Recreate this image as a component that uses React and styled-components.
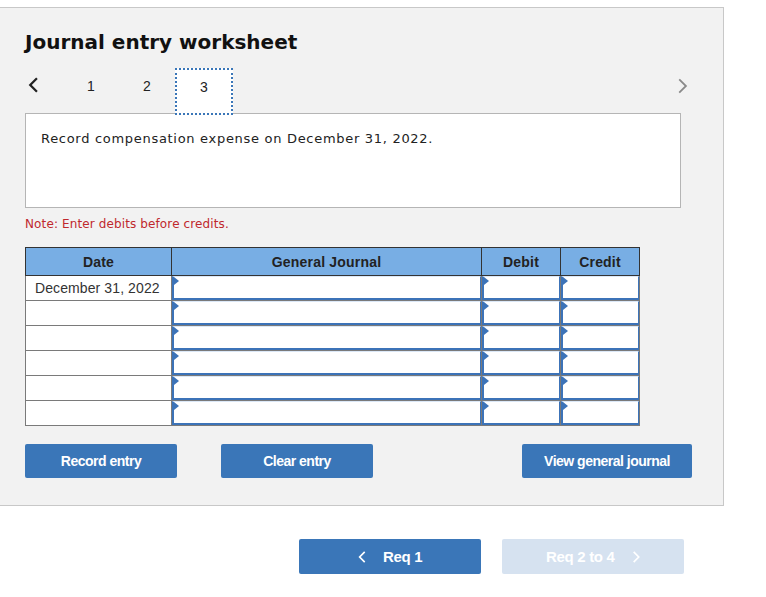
import React from "react";
import styled, { createGlobalStyle } from "styled-components";

const GlobalStyle = createGlobalStyle`
  body {
    margin: 0;
    background: #ffffff;
    font-family: "Liberation Sans", Arial, sans-serif;
  }
`;

const Page = styled.div`
  padding-top: 7px;
  width: 766px;
`;

const Panel = styled.div`
  width: 724px;
  height: 499px;
  box-sizing: border-box;
  background: #f2f2f2;
  border: 1px solid #c8c8c8;
  border-left: none;
  padding: 21px 0 0 25px;
`;

const Title = styled.h1`
  margin: 0;
  font-family: "DejaVu Sans", Verdana, sans-serif;
  font-size: 20px;
  font-weight: bold;
  line-height: 26px;
  color: #111;
`;

const TabRow = styled.div`
  display: flex;
  align-items: stretch;
  height: 47px;
  margin-top: 13px;
  width: 663px;
  position: relative;
  z-index: 2;
`;

const Arrow = styled.div`
  width: ${(p) => p.$w}px;
  display: flex;
  align-items: center;
  justify-content: ${(p) => (p.$right ? "flex-end" : "flex-start")};
  padding-left: ${(p) => (p.$right ? 0 : 3)}px;
  padding-bottom: ${(p) => (p.$right ? 12 : 14)}px;
  margin-left: ${(p) => (p.$right ? "auto" : 0)};
`;

const Tab = styled.div`
  width: 56px;
  box-sizing: border-box;
  display: flex;
  align-items: center;
  justify-content: center;
  font-size: 14px;
  color: #222;
  padding-bottom: 12px;
`;

const ActiveTab = styled(Tab)`
  width: 58px;
  background: #fff;
  border: 2px dotted #3a76b8;
  padding-bottom: 10px;
`;

const Prompt = styled.div`
  width: 656px;
  height: 95px;
  box-sizing: border-box;
  margin-top: -2px;
  background: #fff;
  border: 1px solid #b5b5b5;
  padding: 17px 0 0 15px;
  font-family: "DejaVu Sans", Verdana, sans-serif;
  font-size: 13px;
  letter-spacing: 0.7px;
  color: #222;
  position: relative;
  z-index: 1;
`;

const Note = styled.div`
  margin-top: 8px;
  font-family: "DejaVu Sans", Verdana, sans-serif;
  font-size: 12px;
  letter-spacing: 0.12px;
  color: #c0282d;
  line-height: 16px;
`;

const Table = styled.table`
  margin-top: 15px;
  border-collapse: collapse;
  table-layout: fixed;
  width: 614px;
`;

const Th = styled.th`
  width: ${(p) => p.$w}px;
  height: 27px;
  padding: 0;
  background: #78aee4;
  border: 1px solid #333;
  font-size: 14px;
  font-weight: bold;
  letter-spacing: 0.2px;
  color: #222;
  text-align: center;
`;

const DateCell = styled.td`
  height: 24px;
  padding: 0 0 0 9px;
  background: #fff;
  border: 1px solid #7a7a7a;
  font-size: 14px;
  letter-spacing: 0.1px;
  color: #333;
  white-space: nowrap;
`;

const InputCell = styled.td`
  height: 24px;
  padding: 0;
  border: 1px solid #7a7a7a;
  background: #fff;
`;

const Field = styled.div`
  height: 24px;
  box-sizing: border-box;
  border: 1px solid #3c73b8;
  border-left-width: 2px;
  border-bottom-width: 2px;
  border-top-color: #dbe8f7;
  background: #fff;
  position: relative;

  &::before {
    content: "";
    position: absolute;
    left: 0;
    top: 0;
    border-left: 5px solid #3c73b8;
    border-top: 4px solid transparent;
    border-bottom: 4px solid transparent;
  }
`;

const ButtonRow = styled.div`
  display: flex;
  margin-top: 18px;
  width: 667px;
`;

const Button = styled.button`
  height: 34px;
  width: ${(p) => p.$w}px;
  margin-left: ${(p) => p.$ml || 0}px;
  border: none;
  border-radius: 2px;
  background: #3a76b8;
  color: #fff;
  font-family: "Liberation Sans", Arial, sans-serif;
  font-size: 14px;
  font-weight: bold;
  letter-spacing: -0.5px;
  cursor: pointer;
`;

const Footer = styled.div`
  display: flex;
  gap: 21px;
  padding: 33px 0 0 299px;
`;

const NavButton = styled.button`
  width: 182px;
  height: 35px;
  border: none;
  border-radius: 2px;
  background: ${(p) => (p.$disabled ? "#d6e2f0" : "#3a76b8")};
  color: #fff;
  font-family: "Liberation Sans", Arial, sans-serif;
  font-size: 15px;
  font-weight: bold;
  letter-spacing: -0.3px;
  display: flex;
  align-items: center;
  justify-content: center;
  gap: 17px;
`;

const Chevron = ({ dir = "left", color = "#222", size = 14, stroke = 2.2 }) => (
  <svg width={size * 0.7} height={size} viewBox="0 0 10 14">
    <path
      d={dir === "left" ? "M8 1 L2 7 L8 13" : "M2 1 L8 7 L2 13"}
      fill="none"
      stroke={color}
      strokeWidth={stroke}
    />
  </svg>
);

const columns = [
  { label: "Date", w: 145 },
  { label: "General Journal", w: 309 },
  { label: "Debit", w: 78 },
  { label: "Credit", w: 78 },
];

const rows = ["December 31, 2022", "", "", "", "", ""];

export default function App() {
  return (
    <Page>
      <GlobalStyle />
      <Panel>
        <Title>Journal entry worksheet</Title>
        <TabRow>
          <Arrow $w={35}>
            <Chevron dir="left" color="#222" size={16} stroke={2} />
          </Arrow>
          <Tab>1</Tab>
          <Tab>2</Tab>
          <ActiveTab>3</ActiveTab>
          <Arrow $w={20} $right>
            <Chevron dir="right" color="#8a8a8a" size={16} stroke={1.6} />
          </Arrow>
        </TabRow>
        <Prompt>Record compensation expense on December 31, 2022.</Prompt>
        <Note>Note: Enter debits before credits.</Note>
        <Table>
          <thead>
            <tr>
              {columns.map((c) => (
                <Th key={c.label} $w={c.w}>
                  {c.label}
                </Th>
              ))}
            </tr>
          </thead>
          <tbody>
            {rows.map((d, i) => (
              <tr key={i}>
                <DateCell>{d}</DateCell>
                <InputCell>
                  <Field />
                </InputCell>
                <InputCell>
                  <Field />
                </InputCell>
                <InputCell>
                  <Field />
                </InputCell>
              </tr>
            ))}
          </tbody>
        </Table>
        <ButtonRow>
          <Button $w={152}>Record entry</Button>
          <Button $w={152} $ml={44}>
            Clear entry
          </Button>
          <Button $w={170} $ml={149}>
            View general journal
          </Button>
        </ButtonRow>
      </Panel>
      <Footer>
        <NavButton>
          <Chevron dir="left" color="#fff" size={12} stroke={2} />
          Req 1
        </NavButton>
        <NavButton $disabled>
          Req 2 to 4
          <Chevron dir="right" color="#fff" size={12} stroke={2} />
        </NavButton>
      </Footer>
    </Page>
  );
}
